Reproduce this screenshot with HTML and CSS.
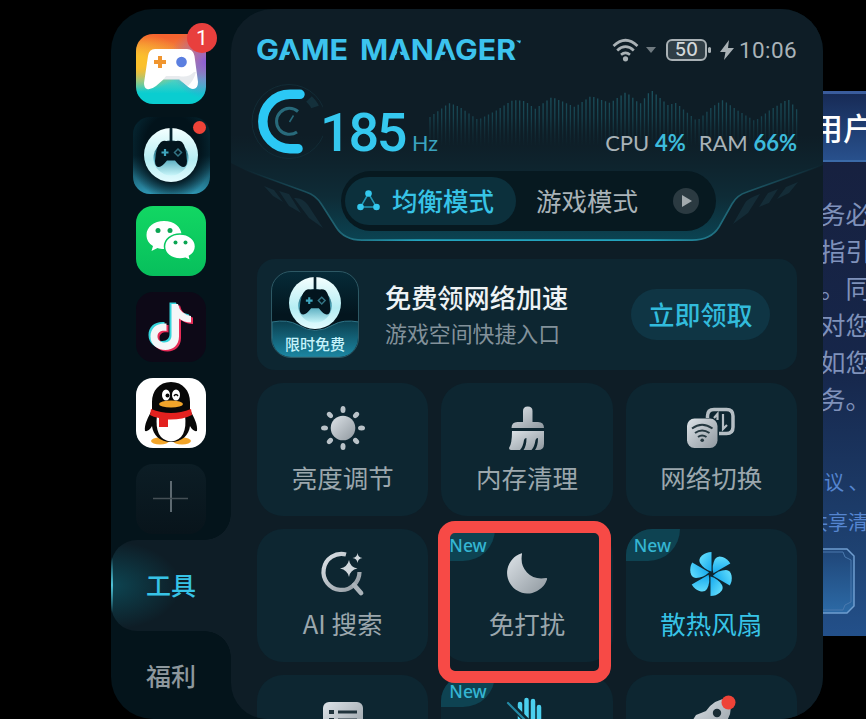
FILE: index.html
```html
<!DOCTYPE html>
<html lang="zh-CN">
<head>
<meta charset="utf-8">
<title>Game Manager</title>
<link rel="stylesheet" href="styles.css">
</head>
<body>

    <svg class="defs" width="0" height="0">
        <defs>
            <linearGradient id="silver" x1="0" y1="0" x2="1" y2="1">
                <stop offset="0" stop-color="#dde3e8"/>
                <stop offset="1" stop-color="#8f989f"/>
            </linearGradient>
            <linearGradient id="cyan" x1="0" y1="0" x2="1" y2="1">
                <stop offset="0" stop-color="#6fe6ff"/>
                <stop offset="1" stop-color="#15a9ee"/>
            </linearGradient>
            <linearGradient id="orb" x1="0" y1="0" x2="0" y2="1">
                <stop offset="0" stop-color="#f4ffff"/>
                <stop offset=".6" stop-color="#b5edf3"/>
                <stop offset="1" stop-color="#e4fcff"/>
            </linearGradient>
            <linearGradient id="orbIn" x1="0" y1="0" x2="0" y2="1">
                <stop offset="0" stop-color="#0b3745"/>
                <stop offset=".5" stop-color="#4fa6ba"/>
                <stop offset="1" stop-color="#c9f6fa"/>
            </linearGradient>
            <symbol id="space" viewBox="0 0 54 54">
                <circle cx="27" cy="27" r="27" fill="url(#orb)"/>
                <circle cx="27" cy="30" r="17.500" fill="url(#orbIn)"/>
                <path d="M25.600 0h2.800v14h-2.800z" fill="#05202b"/>
                <path d="M17 14q3-2 6-.8h8q4-1.200 7 .8 4 4 5 19 0 6-4 6-3 0-8-6.500h-8q-5 6.500-8 6.500-4 0-4-6 1-15 6-19z" fill="#03151e"/>
                <path d="M21 21v7M17.500 24.500h7" stroke="#3fa5bd" stroke-width="2.200"/>
                <path d="M34 21l3.500 3.500-3.500 3.500-3.500-3.500z" fill="none" stroke="#347484" stroke-width="1.500"/>
            </symbol>
        </defs>
    </svg>

    <div class="dialog">
        <div class="dialog-head">用户</div>
        <div class="dialog-body">
            <p>务必<br>指引<br>。同<br>对您<br>如您<br>务。</p>
            <div class="links"><a>议 、</a><a class="shift">共享清</a></div>
            <svg class="dialog-btn" width="60" height="66" viewBox="0 0 60 66">
                <defs><linearGradient id="btn" x1="0" y1="0" x2="0" y2="1"><stop offset="0" stop-color="#1f4577"/><stop offset="1" stop-color="#2c6aa6"/></linearGradient></defs>
                <path d="M0 1h47l7 7v50l-7 7H0z" fill="url(#btn)" stroke="#6f9dcf" stroke-width="1.500"/>
                <path d="M0 4h43l2 5 6 3v42l-6 3-2 5H0" fill="none" stroke="#4a79ae"/>
            </svg>
        </div>
    </div>

    <div class="panel">
        <div class="sidebar">
            <div class="app app-game">
                <svg width="70" height="70" viewBox="0 0 70 70">
                    <path d="M19 15H51Q57 15 58.500 22L62 48Q62 55 57 55Q54 55 50 51L43 45H28L20 52Q15 56 11 55Q8 54 8 49L12 22Q13 15 19 15Z" fill="#fff"/>
                    <path d="M58 38Q52 44 43 42H30L27 46H43L52 52Q58 46 60 38Z" fill="#d9dde2" opacity=".6"/>
                    <path d="M24 22v12M18 28h12" stroke="#f0952f" stroke-width="4"/>
                    <circle cx="45.500" cy="28" r="5.300" fill="#5b7fe0"/>
                </svg>
                <span class="count">1</span>
            </div>
            <div class="app app-space">
                <svg width="54" height="54"><use href="#space"/></svg>
                <span class="dot"></span>
            </div>
            <div class="app app-chat">
                <svg width="70" height="70" viewBox="0 0 70 70">
                    <path d="M28 15c-10 0-17.500 6-17.500 14 0 5 2.500 8.500 6.500 11l-1.500 5 6-3c2 .6 4 1 6.500 1C38 43 45.500 37 45.500 29S38 15 28 15z" fill="#fff"/>
                    <path d="M44 28c-9 0-15.500 5.500-15.500 12.500S35 53 44 53c2 0 4-.3 5.500-.8l5 2.500-1-4.500c3.500-2.200 6-5.500 6-9.700C59.500 33.500 53 28 44 28z" fill="#fff" stroke="#08c860" stroke-width="1.500"/>
                    <g fill="#0aa552"><circle cx="22" cy="24.500" r="2.500"/><circle cx="34" cy="24.500" r="2.500"/><circle cx="39.500" cy="36.500" r="2"/><circle cx="49.500" cy="36.500" r="2"/></g>
                </svg>
            </div>
            <div class="app app-note">
                <svg width="70" height="70" viewBox="0 0 70 70">
                    <defs><path id="note" d="M35.500 12h6.500q2 10 13 12v6.500q-7 0-12-4v18c0 8.500-6 13.500-13.500 13.500-8.500 0-15-5.500-15-13.500 0-8.500 6.500-14 16-13v7.500c-5-1-9 1-9 5.500 0 3.500 3 6 7 6 4.500 0 7-3 7-7z"/></defs>
                    <use href="#note" x="-2" y="-1.500" fill="#35d5dc"/>
                    <use href="#note" x="2" y="1.500" fill="#e62c57"/>
                    <use href="#note" fill="#f4f6f8"/>
                </svg>
            </div>
            <div class="app app-penguin">
                <svg width="70" height="70" viewBox="0 0 70 70">
                    <ellipse cx="24" cy="63" rx="9" ry="3.500" fill="#f2a52a"/>
                    <ellipse cx="46" cy="63" rx="9" ry="3.500" fill="#f2a52a"/>
                    <path d="M35 4c-12 0-19 9-19 20v8c-4 7-8 15-7 21 3 1 6-3 7-5 1 9 8 16 19 16s18-7 19-16c1 2 4 6 7 5 1-6-3-14-7-21v-8C54 13 47 4 35 4z" fill="#080808"/>
                    <path d="M21 37h28q3 25-14 26.500Q18 62 21 37z" fill="#fff"/>
                    <ellipse cx="30" cy="17" rx="4" ry="5.500" fill="#fff"/><ellipse cx="40" cy="17" rx="4" ry="5.500" fill="#fff"/>
                    <circle cx="31.500" cy="17.500" r="2" fill="#080808"/><path d="M38 18q2-3 4 0" fill="none" stroke="#080808" stroke-width="1.500"/>
                    <ellipse cx="35" cy="26" rx="12" ry="3.600" fill="#f2a52a"/>
                    <path d="M15 31q20 8 40 0l1 6q-10 5-24 4.500V49h-9v-9q-6-1-9-3z" fill="#e3211f"/>
                </svg>
            </div>
            <div class="app app-add">
                <svg width="70" height="70" viewBox="0 0 70 70">
                    <path d="M35 17v31" stroke="#68747b" stroke-width="1.800"/><path d="M17 34.500h35" stroke="#454f55" stroke-width="1.500"/>
                </svg>
            </div>
            <div class="tab active">工具</div>
            <div class="tab">福利</div>
        </div>

        <div class="main">
            <div class="header">
                <svg class="decor" width="592" height="241" viewBox="231 9 592 241">
                    <defs>
                        <linearGradient id="glow" x1="0" y1="0" x2="0" y2="1">
                            <stop offset="0" stop-color="#0e2a35" stop-opacity="0"/>
                            <stop offset=".6" stop-color="#0e2c37"/>
                            <stop offset="1" stop-color="#0b4352"/>
                        </linearGradient>
                        <linearGradient id="edge" x1="0" y1="0" x2="1" y2="0">
                            <stop offset="0" stop-color="#1b6072" stop-opacity="0"/>
                            <stop offset=".14" stop-color="#1e5a68"/>
                            <stop offset=".3" stop-color="#24a4be"/>
                            <stop offset=".7" stop-color="#24a4be"/>
                            <stop offset=".86" stop-color="#1e5a68"/>
                            <stop offset="1" stop-color="#1b6072" stop-opacity="0"/>
                        </linearGradient>
                        <linearGradient id="bar" gradientUnits="userSpaceOnUse" x1="0" y1="90" x2="0" y2="146">
                            <stop offset="0" stop-color="#1c5461"/>
                            <stop offset=".5" stop-color="#16414d"/>
                            <stop offset="1" stop-color="#123641" stop-opacity="0"/>
                        </linearGradient>
                    </defs>
                    <path d="M231 135H823V165L747 192Q737 195 732 204L719 227Q711 240 692 240H362Q344 240 336 227L322 205Q316 195 306 192L245 170L231 163Z" fill="url(#glow)"/>
                    <path d="M245 170L306 192Q316 195 322 205L336 227Q344 240.100 362 240.100H692Q711 240 719 227L732 204Q737 195 747 192L823 165" fill="none" stroke="url(#edge)" stroke-width="1.600"/>
                    <g fill="#142c37">
                        <path d="M264 186l10 4 9 12-10-6zM279 191l10 3 12 19-12-7zM294 198q8-1 14 7l15 23-14-10z"/>
                        <path d="M733 224l12-21q3-5 15-9l-12 19zM759 207l9-14 10-4-9 14zM777 199l9-12 12-5-9 11z"/>
                    </g>
                    <g id="bars" stroke="url(#bar)" stroke-width="1.300"></g>
                </svg>

                <div class="top-row">
                    <svg class="brand" width="268" height="26" viewBox="0 0 268 26">
                        <text x="-1" y="23" textLength="92" lengthAdjust="spacingAndGlyphs">GAME</text>
                        <text x="103" y="23" textLength="156" lengthAdjust="spacingAndGlyphs">MANAGER</text>
                        <path d="M259 3.500h5l-1 3z" fill="#3cc3ee"/>
                        <!-- open up the crossbar of each A -->
                        <g fill="#0e1d26">
                            <path d="M34.500 12l4.800 11.500h-9.600z"/>
                            <path d="M141.500 12l4.800 11.500h-9.600z"/>
                            <path d="M190 12l4.800 11.500h-9.600z"/>
                        </g>
                    </svg>
                    <div class="status">
                        <svg width="27" height="24" viewBox="0 0 27 24" fill="none" stroke="#a9b1b5" stroke-width="2.700">
                            <path d="M1.500 8Q13.500-3.500 25.500 8M5.200 12.500q8.300-7.600 16.600 0M9 16.800q4.500-3.800 9 0"/>
                            <circle cx="13.500" cy="20.800" r="2.600" fill="#a9b1b5" stroke="none"/>
                        </svg>
                        <svg class="caret" width="10" height="6"><path d="M0 0h10L5 6z" fill="#6f7a80"/></svg>
                        <span class="battery">50</span>
                        <svg class="bolt" width="14" height="20" viewBox="0 0 14 20"><path d="M9 0L0 12h5.500L4 20 14 8H8z" fill="#a9b1b5"/></svg>
                        <span class="clock">10:06</span>
                    </div>
                </div>

                <div class="stats">
                    <svg width="72" height="78" viewBox="251 82 72 78" fill="none">
                        <circle cx="289" cy="121.500" r="37" stroke="#132c36"/>
                        <path d="M309 99q5 5 6 8" stroke="#14303b" stroke-width="8"/>
                        <path d="M300 94.300H290A27.200 27.200 0 0 0 290 148.700H298" stroke="#2bc8f5" stroke-width="9.500" stroke-linecap="round"/>
                        <path d="M298 111.500a13 13 0 1 0-1 20.500" stroke="#286a7b" stroke-width="3"/>
                        <path d="M289.500 122l4-6.500" stroke="#286a7b" stroke-width="1.500"/>
                    </svg>
                    <span class="rate">185</span><span class="unit">Hz</span>
                    <div class="usage">CPU <b>4%</b><span class="ram">RAM <b>66%</b></span></div>
                </div>

                <div class="modes">
                    <div class="mode on">
                        <svg width="23" height="21" viewBox="0 0 23 21" fill="#34c8ee">
                            <path d="M11.500 3.500L3.500 17h16z" fill="none" stroke="#2297b4" stroke-width="1.500"/>
                            <circle cx="11.500" cy="3.500" r="3.300"/><circle cx="3.500" cy="17" r="3.300"/><circle cx="19.500" cy="17" r="3.300"/>
                        </svg>
                        均衡模式
                    </div>
                    <div class="mode">游戏模式</div>
                    <svg class="play" width="26" height="26"><circle cx="13" cy="13" r="13" fill="#2b3a41"/><path d="M9 7l10 6-10 6z" fill="#a3abae"/></svg>
                </div>
            </div>

            <div class="promo">
                <div class="promo-icon">
                    <svg class="wave" width="87" height="38" viewBox="0 0 87 38"><defs><linearGradient id="wv" x1="0" y1="0" x2="0" y2="1"><stop offset="0" stop-color="#0b4050"/><stop offset="1" stop-color="#1c86a2"/></linearGradient></defs><path d="M0 3Q16 0 26 6Q43 17 61 6Q71 0 87 3V38H0z" fill="url(#wv)" stroke="#2f7487"/></svg>
                    <svg class="orb" width="52" height="52"><use href="#space"/></svg>
                    <span>限时免费</span>
                </div>
                <div class="promo-text">
                    <div class="promo-title">免费领网络加速</div>
                    <div class="promo-sub">游戏空间快捷入口</div>
                </div>
                <div class="claim">立即领取</div>
            </div>

            <div class="tools">
                <div class="tool">
                    <svg width="50" height="44" viewBox="0 0 50 44" fill="url(#silver)">
                        <circle cx="25" cy="22" r="12.300"/>
                        <g fill="#b9c2c8">
                            <ellipse cx="25" cy="3.500" rx="2.500" ry="3.500"/><ellipse cx="25" cy="40.500" rx="2.500" ry="3.500"/>
                            <ellipse cx="6.500" cy="22" rx="3.500" ry="2.500"/><ellipse cx="43.500" cy="22" rx="3.500" ry="2.500"/>
                            <g transform="rotate(45 25 22)"><ellipse cx="25" cy="3.500" rx="2.500" ry="3.500"/><ellipse cx="25" cy="40.500" rx="2.500" ry="3.500"/><ellipse cx="6.500" cy="22" rx="3.500" ry="2.500"/><ellipse cx="43.500" cy="22" rx="3.500" ry="2.500"/></g>
                        </g>
                    </svg>
                    亮度调节
                </div>
                <div class="tool">
                    <svg width="50" height="44" viewBox="0 0 50 44" fill="url(#silver)">
                        <path d="M21 16V5q0-4.500 4.800-4.500T30.500 5v11H36q6 0 6 6H9.500q0-6 6-6z"/>
                        <path d="M10 25h32v13q0 6-6 6h-3q3-4 3-12-2 0-2.500 2-1 7-4 10h-8q3-4 3-12-2 0-2.500 2-1 7-4 10H9q-2 0-2-2 3-4 3-17z"/>
                    </svg>
                    内存清理
                </div>
                <div class="tool">
                    <svg width="50" height="44" viewBox="0 0 50 44">
                        <path d="M21.500 12V10q0-6.500 6.500-6.500h12.500q6.500 0 6.500 6.500v11q0 6.500-6.500 6.500H33" fill="none" stroke="#b5bec4" stroke-width="3.500"/>
                        <path d="M31.500 14V8l-3.500 4M37 8v15l4-4" fill="none" stroke="#b5bec4" stroke-width="2.200"/>
                        <rect x="1" y="12.500" width="30.500" height="29.500" rx="7.500" fill="url(#silver)"/>
                        <g fill="none" stroke="#263941" stroke-width="2"><path d="M6 22.500q10-7.500 20.500 0M9 27q7-5 14.500 0M12 31q4-3 8.500 0"/></g>
                        <circle cx="16.200" cy="34.300" r="1.800" fill="#263941"/>
                    </svg>
                    网络切换
                </div>
                <div class="tool">
                    <svg width="50" height="44" viewBox="0 0 50 44">
                        <path d="M28 2.500A18 18 0 1 0 41.500 20" fill="none" stroke="url(#silver)" stroke-width="4.200"/>
                        <path d="M36 33l7 8" stroke="#aab3b9" stroke-width="4.800" stroke-linecap="round"/>
                        <path d="M31 8q1 7 8.500 8.500Q32 18 31 25q-1.500-7-9-8.500Q29.500 15 31 8zM39.500 1q.5 4.500 5 5-4.500.5-5 5-.5-4.500-5-5 4.500-.5 5-5z" fill="#d0d7dc"/>
                    </svg>
                    AI 搜索
                </div>
                <div class="tool">
                    <em>New</em>
                    <svg width="50" height="44" viewBox="0 0 50 44"><path d="M20 2Q18 13 25 20.500t19 5.500q1.500-.3 1 1.500A20.500 20.500 0 1 1 19 1.500q1.300-.8 1 .5z" fill="url(#silver)"/></svg>
                    免打扰
                </div>
                <div class="tool cool">
                    <em>New</em>
                    <svg width="50" height="44" viewBox="0 0 50 44">
                        <defs><path id="blade" d="M25.500 19.500Q18 17.500 14 11 12 7 16 3.500 20 0 25.500 0z"/></defs>
                        <g fill="url(#cyan)">
                            <use href="#blade"/><use href="#blade" transform="rotate(60 25 22)"/><use href="#blade" transform="rotate(120 25 22)"/><use href="#blade" transform="rotate(180 25 22)"/><use href="#blade" transform="rotate(240 25 22)"/><use href="#blade" transform="rotate(300 25 22)"/>
                        </g>
                    </svg>
                    散热风扇
                </div>
                <div class="tool">
                    <svg width="50" height="44" viewBox="0 0 50 44">
                        <rect x="5" y="4" width="40" height="40" rx="6" fill="url(#silver)"/>
                        <path d="M20 14h19M20 22h19M20 31h19" stroke="#20333c" stroke-width="3"/><path d="M11 14h5M11 22h5M11 31h5" stroke="#20333c" stroke-width="4"/>
                    </svg>
                </div>
                <div class="tool">
                    <em>New</em>
                    <svg width="50" height="44" viewBox="0 0 50 44" stroke-linecap="round">
                        <path d="M18 24V6M24.500 24V2M31 24V3M37 24V9" stroke="#4bd0ee" stroke-width="4.500"/>
                        <path d="M16 22h23v14q-8 8-18 3L8 24q2-5 8 2z" fill="#32b9dd"/>
                        <path d="M7 5l36 36" stroke="#0e2731" stroke-width="6"/><path d="M6 5l38 38" stroke="#248aa6" stroke-width="2.200"/>
                    </svg>
                </div>
                <div class="tool">
                    <svg width="50" height="44" viewBox="0 0 50 44">
                        <path d="M43 0Q28 1 20 13L10 17 3 28l12-1 10 12 2-2-1 7 12-9 1-10Q48 15 43 0z" fill="url(#silver)"/>
                        <circle cx="31" cy="15" r="4.200" fill="#1b2d35"/><circle cx="42.500" cy="4.500" r="7" fill="#ee4338"/>
                    </svg>
                </div>
            </div>
        </div>
    </div>

    <div class="highlight"></div>

    <script>
    // [x, top] points of the load graph
    const points = [[430, 117], [449, 103], [460, 107], [478, 120], [497, 110], [513, 100], [525, 101], [535, 109], [552, 97], [575, 107], [591, 96], [610, 103], [626, 92], [640, 104], [651, 90], [668, 105], [676, 103], [697, 121], [712, 107], [723, 100], [737, 110], [755, 121], [770, 110], [788, 99], [798, 111]]
    const barsDom = document.getElementById("bars")
    let lines = ""
    for (let x = 430; x < 798; x += 3.9) {
        const i = points.findIndex(p => p[0] > x)
        const [x0, y0] = points[i - 1]
        const [x1, y1] = points[i]
        const y = y0 + (y1 - y0) * (x - x0) / (x1 - x0)
        lines += `<path d="M${x.toFixed(1)} ${y.toFixed(1)}V146"/>`
    }
    barsDom.innerHTML = lines
    </script>

</body>
</html>
```

FILE: styles.css
```css
* {
    box-sizing: border-box;
}

body {
    margin: 0;
    height: 719px;
    overflow: hidden;
    position: relative;
    background: #000;
    font-family: "Noto Sans CJK SC", sans-serif;
    color: #a9b3b8;
}

svg {
    display: block;
    flex: none;
}

.defs {
    position: absolute;
}

/* Game dialog behind the panel */
.dialog {
    position: absolute;
    left: 800px;
    top: 91px;
    width: 66px;
    height: 545px;
    overflow: hidden;
    white-space: nowrap;
    background: linear-gradient(#171f3c, #16264a 50%, #1e4272 85%, #23508a);
}

.dialog-head {
    height: 71px;
    padding-left: 12px;
    border-top: 3px solid #3a5c9c;
    border-bottom: 2px solid #3b6aa8;
    background: linear-gradient(#172b56, #28508c);
    color: #fff;
    font-size: 31px;
    font-weight: 500;
    line-height: 66px;
}

.dialog-body {
    padding: 32px 0 0 20px;
}

.dialog p {
    margin: 0;
    font-size: 25.5px;
    line-height: 37px;
    color: #7f91ba;
}

.links {
    display: flex;
    flex-direction: column;
    padding: 46px 0 0 4px;
    font-size: 20px;
    line-height: 40px;
    color: #5585d0;
}

.links .shift {
    margin-left: -16px;
}

.dialog-btn {
    margin-top: 6px;
    margin-left: -20px;
}

/* Panel */
.panel {
    display: flex;
    width: 712px;
    height: 710px;
    margin: 9px 0 0 111px;
    position: relative;
    overflow: hidden;
    border-radius: 42px;
    background: #04141b;
}

.sidebar {
    width: 120px;
    display: flex;
    flex-direction: column;
    align-items: center;
    gap: 16px;
    padding-top: 25px;
}

.app {
    position: relative;
    flex: none;
    width: 70px;
    height: 70px;
    border-radius: 17px;
}

.app-game {
    background: radial-gradient(circle at 100% 40%, #8a5ed8 0, rgba(138, 94, 216, 0) 45%), radial-gradient(ellipse at 0 40%, #fbc02c 10%, rgba(251, 179, 44, 0) 50%), linear-gradient(#f4632f 5%, #f09a4a 35%, #52cfc0 65%, #0acdd0 85%);
}

.count {
    position: absolute;
    right: -11px;
    top: -11px;
    width: 30px;
    height: 30px;
    border-radius: 50%;
    background: #e83f3d;
    color: #fff;
    font: 21px/30px Roboto, sans-serif;
    text-align: center;
}

.app-space {
    width: 77px;
    height: 77px;
    margin: -3px 0 -4px;
    padding: 11px 0 0 11px;
    background: radial-gradient(ellipse at 50% 40%, #02131b 50%, rgba(2, 19, 27, 0) 80%), linear-gradient(#062733 50%, #2f96b3);
}

.dot {
    position: absolute;
    right: 4px;
    top: 4px;
    width: 13px;
    height: 13px;
    border-radius: 50%;
    background: #ee4338;
}

.app-chat {
    background: linear-gradient(#12d763, #07bf5c);
}

.app-note {
    background: #0d0917;
}

.app-penguin {
    background: #fff;
}

.app-add {
    background: linear-gradient(#0c1d25, #08141b);
}

.tab {
    position: relative;
    width: 120px;
    height: 91px;
    margin-top: -16px;
    flex: none;
    font-size: 25px;
    font-weight: 500;
    line-height: 88px;
    text-align: center;
    color: #8e989d;
}

.tab.active {
    margin-top: -10px;
    border-radius: 26px 0 0 26px;
    background: radial-gradient(ellipse 70px 44px at 0 50%, #0d4552, rgba(13, 69, 82, 0)), #0e1d26;
    color: #37c3e6;
}

/* Rounded joins between the active tab and the main column */
.tab.active::before,
.tab.active::after {
    content: "";
    position: absolute;
    right: 0;
    width: 26px;
    height: 26px;
}

.tab.active::before {
    top: -26px;
    background: radial-gradient(circle at 0 0, rgba(14, 29, 38, 0) 25.5px, #0e1d26 26px);
}

.tab.active::after {
    bottom: -26px;
    background: radial-gradient(circle at 0 100%, rgba(14, 29, 38, 0) 25.5px, #0e1d26 26px);
}

.sidebar::after {
    content: "";
    position: absolute;
    left: 0;
    top: 548px;
    width: 2px;
    height: 56px;
    background: linear-gradient(rgba(79, 194, 214, 0), #4fc2d6, rgba(79, 194, 214, 0));
}

.main {
    width: 592px;
    height: 710px;
    overflow: hidden;
    border-radius: 42px 0 0 36px;
    background: #0e1d26;
}

.header {
    position: relative;
    height: 241px;
    padding: 28px 26px 0;
}

.decor {
    position: absolute;
    left: 0;
    top: 0;
}

.top-row,
.stats,
.modes {
    position: relative;
    display: flex;
}

.top-row {
    align-items: center;
    justify-content: space-between;
    height: 26px;
}

.brand text {
    font-family: Inter, sans-serif;
    font-size: 28px;
    font-weight: 700;
    fill: #3cc3ee;
}

.status {
    display: flex;
    align-items: center;
}

.caret {
    margin: 0 10px 0 7px;
}

.battery {
    position: relative;
    width: 41px;
    height: 22px;
    border: 2px solid #a9b1b5;
    border-radius: 6px;
    background: #303e46;
    color: #d3d8da;
    font: 500 18px/18px Inter, sans-serif;
    text-align: center;
}

.battery::after {
    content: "";
    position: absolute;
    right: -6px;
    top: 6px;
    width: 3px;
    height: 6px;
    border-radius: 2px;
    background: #a9b1b5;
}

.bolt {
    margin: 0 5px 0 13px;
}

.clock {
    font: 22.5px/26px Roboto, sans-serif;
    letter-spacing: .4px;
}

.stats {
    height: 78px;
    margin: 19px 0 0 -6px;
}

.rate {
    margin-left: -3px;
    width: 86px;
    color: #35c8ef;
    font: 500 54px/101px Roboto, sans-serif;
    letter-spacing: -2.3px;
}

.unit {
    margin-left: 6px;
    color: #3aa3bf;
    font: 21.5px/122px Lato, sans-serif;
}

.usage {
    margin-left: auto;
    font: 22px/122px Lato, sans-serif;
    white-space: nowrap;
}

.usage b {
    font-weight: 700;
    color: #3dbbdc;
}

.ram {
    margin-left: 13px;
}

.modes {
    align-items: center;
    width: 375px;
    height: 60px;
    margin: 11px 0 0 84px;
    padding-left: 4px;
    border-radius: 30px;
    background: #071920;
}

.mode {
    margin-left: 20px;
    font-size: 25.5px;
    line-height: 46px;
    padding-bottom: 2px;
    white-space: nowrap;
}

.mode.on {
    display: flex;
    align-items: center;
    gap: 12px;
    width: 171px;
    height: 48px;
    margin-left: 0;
    padding-left: 12px;
    border-radius: 24px;
    background: #0c303c;
    color: #37c3e6;
    font-weight: 500;
}

.play {
    margin-left: 35px;
}

.promo {
    display: flex;
    align-items: center;
    width: 540px;
    height: 111px;
    margin: 9px 0 0 26px;
    padding: 0 27px 0 14px;
    border-radius: 18px;
    background: #0d2631;
}

.promo-icon {
    position: relative;
    width: 88px;
    height: 87px;
    overflow: hidden;
    border: 1px solid #2d5864;
    border-radius: 20px;
    background: linear-gradient(#062b38, #03151e 50%);
    color: #c5f3fb;
    font-size: 15px;
    font-weight: 500;
    text-align: center;
}

.wave {
    position: absolute;
    left: 0;
    bottom: 0;
}

.orb {
    position: relative;
    margin: 5px auto 0;
}

.promo-icon span {
    position: relative;
    display: block;
    line-height: 30px;
}

.promo-text {
    margin-left: 26px;
}

.promo-title {
    color: #eef3f5;
    font-size: 26.2px;
    font-weight: 500;
    line-height: 36px;
}

.promo-sub {
    color: #82919a;
    font-size: 21.9px;
    line-height: 35px;
}

.claim {
    width: 139px;
    height: 51px;
    margin-left: auto;
    border-radius: 26px;
    background: #0f3544;
    color: #32bbdc;
    font-size: 26px;
    font-weight: 500;
    line-height: 50px;
    text-align: center;
}

.tools {
    display: grid;
    grid-template-columns: repeat(3, 1fr);
    grid-auto-rows: 133px;
    gap: 13px;
    width: 540px;
    margin: 13px 0 0 26px;
}

.tool {
    position: relative;
    display: flex;
    flex-direction: column;
    align-items: center;
    gap: 9px;
    padding-top: 23px;
    overflow: hidden;
    border-radius: 26px;
    background: #0d2631;
    color: #9ba7ad;
    font-size: 25.5px;
    line-height: 36px;
}

.tool svg {
    overflow: visible;
}

.tool.cool {
    color: #37c3e6;
}

.tool em {
    position: absolute;
    left: 0;
    top: 0;
    width: 54px;
    height: 32px;
    padding-left: 8px;
    border-radius: 0 0 32px 0;
    background: #0e4352;
    color: #35b6d2;
    font: 500 17.5px/32px "Noto Sans", sans-serif;
}

/* Red marker around one tool */
.highlight {
    position: absolute;
    left: 438px;
    top: 521px;
    width: 173px;
    height: 162px;
    border: 12px solid #f74a46;
    border-radius: 17px;
}
```
